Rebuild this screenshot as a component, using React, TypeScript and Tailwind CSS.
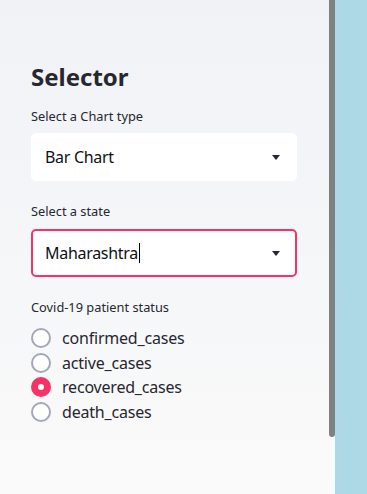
import React, {useState} from "react";

const font = {fontFamily: '"Noto Sans", "Open Sans", sans-serif'};

function SelectBox({value, focused}: {value: string; focused?: boolean}) {
    return (
        <div
            className={
                "flex items-center justify-between h-[48px] rounded-[5px] bg-white " +
                (focused ? "border-2 border-[#f63366] pl-[12px] pr-[15px]" : "pl-[14px] pr-[17px]")
            }
        >
            <span className="text-[16px] leading-[24px] tracking-[-0.3px] text-[#0e1117] flex items-center">
                {value}
                {focused && <span className="inline-block w-px h-[20px] bg-black ml-px"/>}
            </span>
            <svg width="8" height="5" viewBox="0 0 8 5">
                <path d="M0 0 H8 L4 5 Z" fill="#262730"/>
            </svg>
        </div>
    );
}

function Radio({label, checked, onClick}: {label: string; checked: boolean; onClick: () => void}) {
    return (
        <div className="flex items-center h-[24.5px] cursor-pointer" onClick={onClick}>
            {checked ? (
                <div className="w-[20px] h-[20px] rounded-full bg-[#f63366] flex items-center justify-center">
                    <div className="w-[6px] h-[6px] rounded-full bg-white"/>
                </div>
            ) : (
                <div className="w-[20px] h-[20px] rounded-full border-2 border-[#a3a8b8] bg-white"/>
            )}
            <span className="ml-[11px] text-[16px] leading-[24px] tracking-[-0.2px] text-[#262730]">{label}</span>
        </div>
    );
}

export default function App() {
    const [status, setStatus] = useState('recovered_cases')
    const options = ['confirmed_cases', 'active_cases', 'recovered_cases', 'death_cases']
    return (
        <div className="flex w-[367px] h-[494px] overflow-hidden" style={font}>
            <div className="w-[329px] h-full bg-gradient-to-b from-[#f0f2f6] to-[#fafafa] pl-[31px] pr-[32px] pt-[61px]">
                <h2 className="text-[24px] leading-[32px] font-bold text-[#262730]">Selector</h2>
                <p className="mt-[13px] pt-px pb-0 text-[12.8px] leading-[19px] text-[#262730]">Select a Chart type</p>
                <div className="mt-[7px]">
                    <SelectBox value="Bar Chart"/>
                </div>
                <p className="mt-[20px] pt-px text-[12.8px] leading-[19px] text-[#262730]">Select a state</p>
                <div className="mt-[8px]">
                    <SelectBox value="Maharashtra" focused/>
                </div>
                <p className="mt-[20px] pt-px text-[12.8px] leading-[19px] text-[#262730]">Covid-19 patient status</p>
                <div className="mt-[9px] flex flex-col">
                    {options.map(o => (
                        <Radio key={o} label={o} checked={status === o} onClick={() => setStatus(o)}/>
                    ))}
                </div>
            </div>
            <div className="w-[6px] h-full bg-[#fafafa]">
                <div className="w-[6px] h-[437px] bg-[#808080] rounded-b-[3px]"/>
            </div>
            <div className="flex-1 h-full bg-[#add8e6]"/>
        </div>
    );
}
